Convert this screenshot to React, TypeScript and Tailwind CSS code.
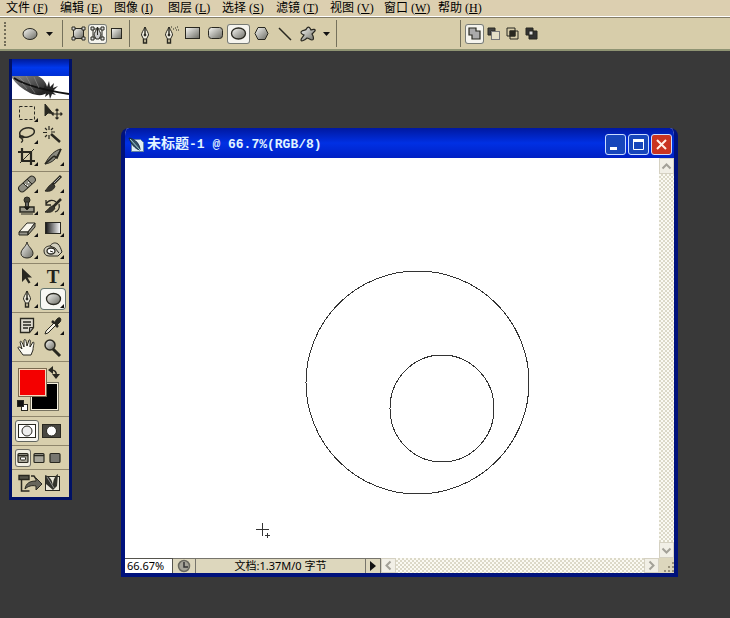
import React from "react";

type IconProps = { children: React.ReactNode; w?: number; h?: number };

function Icon({ children, w = 26, h = 22 }: IconProps) {
  return (
    <svg width={w} height={h} viewBox={`0 0 ${w} ${h}`} fill="none" stroke="#292820" aria-hidden="true" className="block shrink-0">
      {children}
    </svg>
  );
}

function Gradients() {
  return (
    <svg width="0" height="0" className="absolute" aria-hidden="true">
      <defs>
        <linearGradient id="metal" x1="0" y1="0" x2="1" y2="1">
          <stop offset="0" stopColor="#fafaf6" />
          <stop offset="1" stopColor="#686860" />
        </linearGradient>
        <linearGradient id="fade">
          <stop offset="0" stopColor="#111" />
          <stop offset="1" stopColor="#fff" />
        </linearGradient>
        <linearGradient id="feather" x1="0" y1="0" x2="1" y2="1">
          <stop offset="0" stopColor="#8a8a8a" />
          <stop offset="0.6" stopColor="#444" />
          <stop offset="1" stopColor="#151515" />
        </linearGradient>
      </defs>
    </svg>
  );
}

const corner = <path d="M24 16v4h-4z" fill="#111" stroke="none" />;

const penNib = (
  <>
    <path d="M13 3C11 7 9.5 9 9.5 11l2 4h3l2-4C16.500 9 15 7 13 3z" fill="#f5f2e4" />
    <path d="M13 3v8M11.500 15v4h3v-4" strokeWidth="1.400" />
    <circle cx="13" cy="11" r="1" fill="#222" />
  </>
);

const toolGroups: { name: string; pad: string; tools: [string, React.ReactNode][] }[] = [
  {
    name: "Selection",
    pad: "pt-0.5 pb-[3px]",
    tools: [
      ["Rectangular marquee", <><rect x="5.500" y="4.500" width="15" height="13" strokeDasharray="3 2" />{corner}</>],
      ["Move", <><path d="M5 2v12l3-3 5 .5z" fill="#292820" /><path d="M17 7v10M12 12h10M15.500 8.500 17 7l1.500 1.500M15.500 15.500 17 17l1.500-1.500M13.500 10.500 12 12l1.500 1.500M20.500 10.500 22 12l-1.500 1.500" strokeWidth="1.200" /></>],
      ["Lasso", <><ellipse cx="13" cy="8.500" rx="7.500" ry="4.500" transform="rotate(-12 13 8.500)" strokeWidth="1.500" /><path d="M6 11c-1 2 0 3 2 3s2-2 0-2-1 2 0 3 1 2-1 3.500" strokeWidth="1.300" />{corner}</>],
      ["Magic wand", <><path d="M11 10l9 8" strokeWidth="2.500" /><path d="M9 2v4M9 11v4M3 8.500h4M11 8h4M5 4l2 2M13 4l-2 2M5 13l2-2" strokeWidth="1.200" /></>],
      ["Crop", <><path d="M8 2v13h13M4 6h13v13" strokeWidth="2.200" /><path d="M6 17 20 3" />{corner}</>],
      ["Slice", <><path d="M21 3C15 4 9 10 5 18c6-1 10-4 12-8z" fill="#8c8b80" /><path d="M14 10l3 2 4-9M5 18 14 10" strokeWidth="1.600" />{corner}</>],
    ],
  },
  {
    name: "Painting",
    pad: "pt-px pb-0.5",
    tools: [
      ["Healing brush", <><rect x="3" y="7.500" width="20" height="7" rx="3.500" transform="rotate(-42 13 11)" fill="#8f8e83" /><path d="M9 10l5 5M13 6l5 5" /><path d="M11 11l1 1M14 9l1 1M13 12l1 1" stroke="#fff" />{corner}</>],
      ["Brush", <><path d="M21 3 12 12" strokeWidth="3" /><path d="M20 4l-6 6" stroke="#aaa" /><path d="M13 11c-4 0-5 4-8 7 5 1 9-1 10-5z" fill="#3a3932" />{corner}</>],
      ["Clone stamp", <><circle cx="13" cy="5" r="3" fill="#44433a" /><path d="M11.500 7h3v5h-3z" fill="#666" /><path d="M6 12h14v5H6z" fill="#9b998c" strokeWidth="1.500" /><path d="M10 12l3 3 3-3z" fill="#111" /><path d="M7 19h12" />{corner}</>],
      ["History brush", <><path d="M21 4l-8 8" strokeWidth="2.500" /><path d="M13 11c-3 0-5 4-8 6 5 1 8 0 10-4z" fill="#3a3932" /><path d="M6 5v5h5M6 9c3-5 8-4 10-2M19 9c1 4-1 7-4 8" strokeWidth="1.300" />{corner}</>],
      ["Eraser", <><path d="M5 15l8-9h8l-7 9z" fill="#f7f5eb" /><path d="M5 15h9v3H5zM14 15l7-9v4l-7 8z" fill="#96958b" />{corner}</>],
      ["Gradient", <><rect x="5.500" y="5.500" width="15" height="11" fill="url(#fade)" />{corner}</>],
      ["Blur", <><path d="M13 3C12 8 7 10 7 14.500c0 6 12 6 12 0C19 10 14 8 13 3z" fill="url(#metal)" />{corner}</>],
      ["Sponge", <><path d="M4 12c0-4 4-5 6-5 2-3 5-4 8-2 2 2 3 5 4 8l-4 4H9c-3 0-5-2-5-5z" fill="#d3d0c0" /><ellipse cx="11" cy="12" rx="4" ry="3" fill="#fff" strokeWidth="1.300" /><path d="M10 7l5 2 4 5M10 12l3 1" />{corner}</>],
    ],
  },
  {
    name: "Vector",
    pad: "py-0.5",
    tools: [
      ["Path selection", <><path d="M8 2v14l3.500-3.500 3 5 2-1-3-5h4.500z" fill="#292820" stroke="none" />{corner}</>],
      ["Type", <><text x="13" y="17" textAnchor="middle" fill="#22211c" stroke="none" className="font-['Liberation_Serif',serif] text-[19px] font-bold">T</text>{corner}</>],
      ["Pen", <>{penNib}{corner}</>],
      ["Ellipse", <><ellipse cx="13.500" cy="11" rx="7" ry="5.500" fill="url(#metal)" strokeWidth="1.300" />{corner}</>],
    ],
  },
  {
    name: "Utility",
    pad: "py-0.5",
    tools: [
      ["Notes", <><path d="M6.500 3.500h13v9l-4 5h-9z" fill="#dedbd0" strokeWidth="1.300" /><path d="M9 7h8M9 10h8M9 13h5" strokeWidth="1.400" /><path d="M15.500 17.500v-5h4z" fill="#aaa" />{corner}</>],
      ["Eyedropper", <><path d="M14 8l3-4c3-3 5 0 3 3l-4 4z" fill="#292820" /><path d="M12 6l6 6" strokeWidth="2.500" /><path d="M14 8l2 2-8 8-3 1 1-3z" fill="#f6f2e4" />{corner}</>],
      ["Hand", <path d="M9 18l-5-7c0-2 2-1 4 1L6 5c1-2 2 0 4 5L10 3c2-2 2 1 3 6l2-6c2-1 1 2 1 7l3-5c2 0 0 4 0 8l-2 5z" fill="#faf9f3" />],
      ["Zoom", <><path d="M13 12l7 7" strokeWidth="3" /><circle cx="10" cy="8" r="5" fill="url(#metal)" strokeWidth="1.500" /></>],
    ],
  },
];

function Tool({ name, children }: { name: string; children: React.ReactNode }) {
  const active = name === "Ellipse";
  return (
    <button aria-label={name} aria-pressed={active} className={active ? "h-[22px] w-[26px] rounded-sm bg-[#f8f8f4] ring-1 ring-inset ring-[#66756e]" : "h-[22px] w-[26px]"}>
      <Icon>{children}</Icon>
    </button>
  );
}

function Toolbox() {
  return (
    <aside aria-label="Tools" className="mt-2 ml-[9px] w-[63px] shrink-0 self-start border-x-[3px] border-b-[3px] border-[#001166] bg-[#d8cfad]">
      <div className="h-[17px] bg-linear-to-b from-[#001b9a] via-[#0038ed] to-[#0030d5]" />
      <div className="h-6 overflow-hidden border-b border-[#77705a] bg-white">
        <Icon w={57} h={23}>
          <path d="M0 2V0h26c6 3 9 8 9 12l1 4c-4 4-11 4-18 1C10 13 4 8 0 2z" fill="url(#feather)" stroke="none" />
          <path d="M33 9l2 2 2-6 1 6 4-4-1 5 5-2-4 4-1 2 3 3-4-1-2 5-1-5-4 3 1-4-4-1z" fill="#242424" stroke="none" />
          <path d="M2 2c10 7 30 12 55 16" stroke="#111" strokeWidth="1.800" />
          <path d="M7 1l5 5M14 0l5 9M22 1l5 11M10 7l5 6M18 10l5 7" stroke="#999" strokeWidth=".5" />
        </Icon>
      </div>
      {toolGroups.map((g) => (
        <div key={g.name} role="group" aria-label={g.name} className={`border-b border-[#8f866c] pl-0.5 ${g.pad}`}>
          <div className="flex flex-wrap">
            {g.tools.map(([name, art]) => <Tool key={name} name={name}>{art}</Tool>)}
          </div>
        </div>
      ))}
      <div className="h-[55px] border-b border-[#8f866c]">
        <Icon w={57} h={54}>
          <rect x="19.500" y="21.500" width="26" height="26" fill="#000" stroke="#f7f2df" />
          <rect x="18.500" y="20.500" width="28" height="28" stroke="#777360" />
          <rect x="7.500" y="7.500" width="26" height="26" fill="#f40000" stroke="#f7d8bd" />
          <rect x="6.500" y="6.500" width="28" height="28" stroke="#79694e" />
          <path d="M39 8c4 0 6 2 5 6" strokeWidth="1.600" />
          <path d="M41 4v8l-5-4zM40 12h8l-4 5z" fill="#292820" stroke="none" />
          <rect x="9.500" y="42.500" width="6" height="6" fill="#fff" />
          <rect x="5.500" y="38.500" width="6" height="6" fill="#111" />
        </Icon>
      </div>
      <div className="flex h-[29px] items-center border-b border-[#8f866c] pl-[3px]">
        <button aria-label="Standard mode" aria-pressed="true" className="h-[22px] w-6 rounded-[3px] border border-[#62665f] bg-[#f6f5ee]">
          <Icon w={22} h={20}><rect x="2.500" y="3.500" width="17" height="13" fill="#fff" /><circle cx="11" cy="10" r="5" fill="#eee" /></Icon>
        </button>
        <button aria-label="Quick mask mode" className="h-[22px] w-6">
          <Icon w={24} h={22}><rect x="3.500" y="4.500" width="18" height="13" fill="#484741" /><circle cx="12.500" cy="11" r="5" fill="#fff" /></Icon>
        </button>
      </div>
      <div className="flex h-6 items-center border-b border-[#8f866c] pl-[3px]">
        {["Standard screen", "Full screen with menu", "Full screen"].map((name, i) => (
          <button key={name} aria-label={name} className={i === 0 ? "h-[18px] w-4 rounded-[3px] bg-[#f0eee3] ring-1 ring-inset ring-[#6d6c62]" : "h-[18px] w-4"}>
            <Icon w={16} h={18}>
              <rect x="3" y="4.500" width="10" height="9" rx="1" fill={i === 2 ? "#77766f" : "#a8a69a"} strokeWidth="1.200" />
              {i < 2 && <path d="M3 6.500h10" strokeWidth="1.500" />}
              {i === 0 && <rect x="5.500" y="8" width="5" height="3" rx="1" fill="#fff" />}
            </Icon>
          </button>
        ))}
      </div>
      <button aria-label="Jump to ImageReady" className="block h-[27px] w-full">
        <Icon w={57} h={27}>
          <path d="M9.500 9v12h8" strokeWidth="1.500" />
          <path d="M7 5.500h10v4H7z" fill="#55544a" strokeWidth="1.400" />
          <path d="M19 6h3l2 3" strokeWidth="1.400" />
          <path d="M13 19c1-6 5-8 11-8V8l6 6-6 6v-4c-4-1-8 0-11 3z" fill="#66655b" />
          <rect x="33.500" y="6.500" width="14" height="14" fill="#ece9da" />
          <path d="M33 5c6 2 7 6 8 10 0-5 2-9 5-11l-1 12-4 4-7-6z" fill="#33332c" stroke="none" />
          <path d="M35 7l7 11" stroke="#aaa" strokeWidth=".8" />
        </Icon>
      </button>
    </aside>
  );
}

const menus = [["文件", "F"], ["编辑", "E"], ["图像", "I"], ["图层", "L"], ["选择", "S"], ["滤镜", "T"], ["视图", "V"], ["窗口", "W"], ["帮助", "H"]];

function MenuBar() {
  return (
    <nav className="flex h-4 bg-[#dccfb0] pl-1.5 text-black">
      {menus.map(([label, key]) => (
        <button key={key} className="h-4 w-[54px] text-left font-['Liberation_Serif','Noto_Sans_CJK_SC',serif] text-[12px] leading-[14px] whitespace-nowrap">
          {label} (<u>{key}</u>)
        </button>
      ))}
    </nav>
  );
}

function Option({ name, width, on = false, children }: { name: string; width: string; on?: boolean; children: React.ReactNode }) {
  return (
    <button aria-label={name} className={`flex h-5 shrink-0 items-center justify-center rounded-[3px] ${width} ${on ? "bg-[#f5f4ee] ring-1 ring-inset ring-[#777a73]" : ""}`}>
      {children}
    </button>
  );
}

function Divider({ space = "" }: { space?: string }) {
  return <div className={`h-[27px] w-px shrink-0 bg-[#75715c] ${space}`} />;
}

const downArrow = <Icon w={7} h={4}><path d="M0 0h7L3.500 4z" fill="#111" stroke="none" /></Icon>;
const handles = <path d="M3 3h3v3H3zM13 3h3v3h-3zM3 13h3v3H3zM13 13h3v3h-3z" fill="#ddd" />;

function OptionsBar() {
  return (
    <div className="flex h-[34px] items-center overflow-hidden border-t border-b-2 border-t-[#837c66] border-b-[#8f9473] bg-[#d7cdaa]">
      <div className="ml-1 h-6 w-1 shrink-0 border-l-2 border-dotted border-[#716c58]" />
      <div className="ml-2.5 flex">
        <Option name="Tool preset" width="w-6"><Icon w={18} h={14}><ellipse cx="9" cy="7" rx="7" ry="5.500" fill="url(#metal)" /></Icon></Option>
        <Option name="Choose preset" width="w-[14px]">{downArrow}</Option>
      </div>
      <Divider space="ml-1.5" />
      <div className="ml-1.5 flex">
        <Option name="Shape layers" width="w-[19px]"><Icon w={19} h={19}><rect x="4.500" y="4.500" width="10" height="10" fill="url(#metal)" />{handles}</Icon></Option>
        <Option name="Paths" width="w-[19px]" on><Icon w={19} h={19}><path d="M5 5h9v9H5z" />{handles}<path d="M9.500 3C8 7 6 9 6 11l2 4h3l2-4c0-2-2-4-3.500-8zM9.500 3v8" fill="#ccc" /></Icon></Option>
        <Option name="Fill pixels" width="w-[19px]"><Icon w={19} h={19}><rect x="4.500" y="4.500" width="10" height="10" fill="url(#metal)" /></Icon></Option>
      </div>
      <Divider space="ml-[3px]" />
      <div className="ml-[3px] flex">
        <Option name="Pen" width="w-[23px]"><Icon w={26} h={20}>{penNib}</Icon></Option>
        <Option name="Freeform pen" width="w-[25px]"><Icon w={26} h={20}>{penNib}<path d="M15 3h1M17 5h1M19 4h1M21 3h1M20 6h1M22 6h1" /></Icon></Option>
        <Option name="Rectangle" width="w-[23px]"><Icon w={17} h={15}><rect x="1.500" y="1.500" width="14" height="11" fill="url(#metal)" /></Icon></Option>
        <Option name="Rounded rectangle" width="w-[23px]"><Icon w={17} h={15}><rect x="1.500" y="1.500" width="14" height="11" rx="3" fill="url(#metal)" /></Icon></Option>
        <Option name="Ellipse shape" width="w-[23px]" on><Icon w={17} h={15}><ellipse cx="8.500" cy="7.500" rx="7" ry="5.500" fill="url(#metal)" strokeWidth="1.300" /></Icon></Option>
        <Option name="Polygon" width="w-[23px]"><Icon w={17} h={15}><path d="M5 1.500h7l3 6-3 6H5l-3-6z" fill="url(#metal)" /></Icon></Option>
        <Option name="Line" width="w-[23px]"><Icon w={16} h={16}><path d="M2 2l12 12" strokeWidth="1.500" /></Icon></Option>
        <Option name="Custom shape" width="w-[23px]"><Icon w={20} h={18}><path d="M9 3c2-2 3 0 4 2 2-1 5-1 4 1l-3 3c2 3 2 6 0 6s-3-2-5-2c-2 2-6 4-6 2s2-3 3-5C3 9 2 7 4 6s4 0 5-3z" fill="url(#metal)" strokeWidth="1.200" /></Icon></Option>
        <Option name="Shape options" width="w-[14px]">{downArrow}</Option>
      </div>
      <Divider space="ml-[3px]" />
      <Divider space="ml-[123px]" />
      <div className="ml-1 flex">
        <Option name="Add" width="w-[19px]" on><Icon w={17} h={17}><path d="M3 3h7v3h4v8H6v-4H3z" fill="#aaa" strokeWidth="1.200" /></Icon></Option>
        <Option name="Subtract" width="w-[19px]"><Icon w={17} h={17}><path d="M3 3h7v3H6v4H3z" fill="#444" /><rect x="6.500" y="6.500" width="8" height="8" fill="#e5dfc7" stroke="#777" /></Icon></Option>
        <Option name="Intersect" width="w-[19px]"><Icon w={17} h={17}><path d="M3 3h8v8H3zM6 6h8v8H6z" /><rect x="6" y="6" width="5" height="5" fill="#292820" /></Icon></Option>
        <Option name="Exclude" width="w-[19px]"><Icon w={17} h={17}><path d="M3 3h7v3h4v8H6v-4H3z" fill="#333" /><rect x="6" y="6" width="4" height="4" fill="#ddd" /></Icon></Option>
      </div>
    </div>
  );
}

function Chevron({ name, turn, size }: { name: string; turn: string; size: string }) {
  return (
    <button aria-label={name} className={`flex shrink-0 items-center justify-center border border-[#d5d1c2] bg-[#f1efe6] ${size}`}>
      <svg width="11" height="11" viewBox="0 0 11 11" fill="none" stroke="#a3a198" strokeWidth="2" className={turn}><path d="M1.500 7.500l4-4 4 4" /></svg>
    </button>
  );
}

const track = "bg-[repeating-conic-gradient(#dcd9c8_0_25%,#fbfaf3_0_50%)] bg-[length:4px_4px]";
const captionButton = "flex size-[21px] items-center justify-center rounded-[3px] border border-[#cbdcff]";

function DocumentWindow() {
  return (
    <section aria-label="未标题-1" className="mt-[77px] mr-[52px] mb-[41px] ml-[49px] flex min-w-0 flex-1 flex-col overflow-hidden rounded-t-lg border-x-4 border-b-4 border-[#00127c] bg-white">
      <header className="flex h-[30px] shrink-0 items-center bg-linear-to-b from-[#0018a0] via-[#0030e4] to-[#0020c4] pr-0.5 pl-[3px] pt-0.5">
        <Icon w={16} h={17}>
          <path d="M3.500 3.500h9l3 3v9h-12z" fill="#dfedf2" stroke="#6483a0" />
          <path d="M1 2c7 1 11 7 11 12C7 13 3 8 1 2z" fill="#344f63" stroke="#122a46" />
          <path d="M2 3l10 11" stroke="#9fd0ce" />
        </Icon>
        <h1 className="ml-[3px] flex-1 truncate font-['Liberation_Mono','Noto_Sans_CJK_SC',monospace] text-[13px] leading-5 font-bold text-[#e2f4ff]">
          <span className="text-[14px]">未标题</span>-1 @ 66.7%(RGB/8)
        </h1>
        <div className="flex gap-0.5">
          <button aria-label="Minimize" className={`${captionButton} bg-[#1746bb]`}><Icon w={17} h={17}><path d="M3 12.500h7" stroke="#fff" strokeWidth="3" /></Icon></button>
          <button aria-label="Maximize" className={`${captionButton} bg-[#1746bb]`}><Icon w={17} h={17}><path d="M3.500 4v9.500h10V4M3 4.500h11" stroke="#fff" /><path d="M3 4.500h11" stroke="#fff" strokeWidth="3" /></Icon></button>
          <button aria-label="Close" className={`${captionButton} bg-[#c93421]`}><Icon w={17} h={17}><path d="M4 4l9 9M13 4l-9 9" stroke="#fff0e8" strokeWidth="2" /></Icon></button>
        </div>
      </header>
      <div className="flex min-h-0 flex-1">
        <div className="min-w-0 flex-1 overflow-hidden bg-white">
          <svg width="533" height="400" viewBox="0 0 533 400" fill="none" stroke="#333" shapeRendering="crispEdges" role="img" aria-label="Two elliptical paths" className="block">
            <circle cx="292.500" cy="224.500" r="111.500" />
            <ellipse cx="317" cy="250.500" rx="52" ry="53.500" />
            <path d="M131 371.500h13M137.500 365v13M140 377.500h5M142.500 375v5" />
          </svg>
        </div>
        <div className="flex w-[15px] shrink-0 flex-col">
          <Chevron name="Scroll up" turn="" size="h-4 w-full" />
          <div className={`flex-1 ${track}`} />
          <Chevron name="Scroll down" turn="rotate-180" size="h-4 w-full" />
        </div>
      </div>
      <footer className="flex h-[15px] shrink-0 bg-[#ddd7bd] font-['Noto_Sans','Noto_Sans_CJK_SC',sans-serif] text-[11px] leading-[15px] text-black">
        <input aria-label="Zoom level" defaultValue="66.67%" className="w-12 border-t border-r border-[#55544d] bg-white pl-0.5 leading-[14px] outline-none" />
        <button aria-label="Version status" className="flex w-[23px] items-center justify-center border-t border-r border-[#77756c]">
          <Icon w={14} h={14}><circle cx="7" cy="7" r="5.500" fill="#a5a398" stroke="#69685f" strokeWidth="1.500" /><path d="M7 3v5h4" stroke="#333" strokeWidth="1.500" /></Icon>
        </button>
        <div className="w-[170px] truncate border-t border-r border-[#77756c] text-center leading-[14px]">文档:1.37M/0 字节</div>
        <button aria-label="Status options" className="flex w-[15px] items-center justify-center border-t border-r border-[#77756c]">
          <Icon w={6} h={10}><path d="M0 0l6 5-6 5z" fill="#111" stroke="none" /></Icon>
        </button>
        <Chevron name="Scroll left" turn="-rotate-90" size="w-[15px]" />
        <div className={`flex-1 ${track}`} />
        <Chevron name="Scroll right" turn="rotate-90" size="w-[15px]" />
        <Icon w={15} h={15}><path d="M5 13h2M9 13h2M13 13h2M9 9h2M13 9h2M13 5h2" stroke="#98917b" strokeWidth="2" /></Icon>
      </footer>
    </section>
  );
}

export default function App() {
  return (
    <div className="flex min-h-screen flex-col bg-[#393939]">
      <Gradients />
      <div className="border-b border-white"><MenuBar /></div>
      <OptionsBar />
      <main className="flex flex-1">
        <Toolbox />
        <DocumentWindow />
      </main>
    </div>
  );
}
